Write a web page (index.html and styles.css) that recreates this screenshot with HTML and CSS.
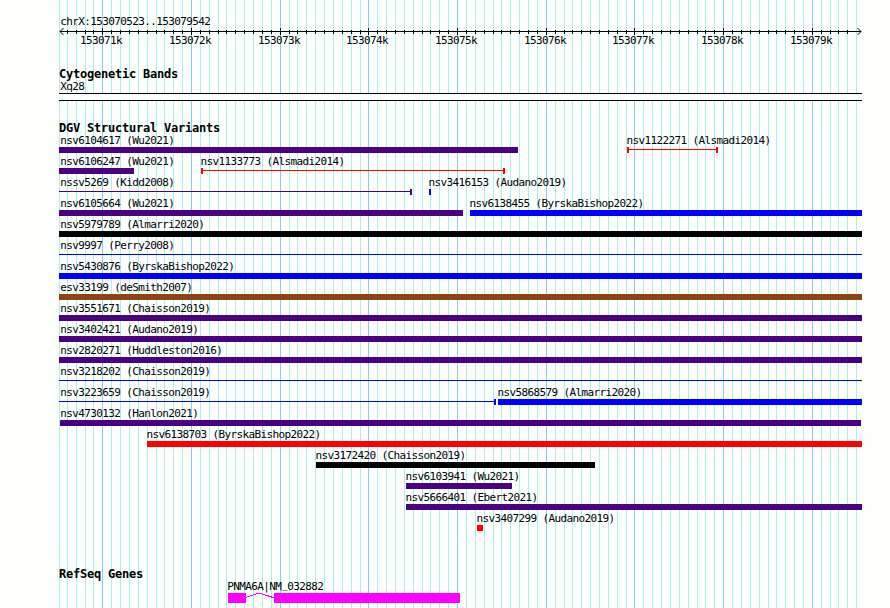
FILE: index.html
```html
<!DOCTYPE html>
<html lang="en">
<head>
<meta charset="utf-8">
<title>chrX:153070523..153079542</title>
<link rel="stylesheet" href="styles.css">
</head>
<body>
<main class="browser">
  <svg class="gridlines" id="gridlines" width="890" height="608" shape-rendering="crispEdges" aria-hidden="true"></svg>
  <section class="scale">
    <p class="label region">chrX:153070523..153079542</p>
    <svg class="axis" id="axis" width="803" height="9" aria-hidden="true"></svg>
    <div class="row ticks" id="ticks"></div>
  </section>
  <section class="cyto">
    <h2 class="heading">Cytogenetic Bands</h2>
    <p class="label">Xq28</p>
    <div class="band"></div>
  </section>
  <section class="variants">
    <h2 class="heading">DGV Structural Variants</h2>
    <div id="variants"></div>
  </section>
  <section class="genes">
    <h2 class="heading">RefSeq Genes</h2>
    <p class="label gene-label">PNMA6A|NM<span class="underscore">_</span>032882</p>
    <div class="gene">
      <span class="exon exon-first"></span>
      <svg class="intron" width="28" height="10" shape-rendering="crispEdges" aria-hidden="true"><path d="M0 4.5L10 .9L16 .9L28 4.8" fill="none" stroke="#f0f"/></svg>
      <span class="exon exon-second"></span>
    </div>
  </section>
</main>
<script src="script.js"></script>
</body>
</html>
```
FILE: styles.css
```css
* { box-sizing: border-box; margin: 0; padding: 0; }
body { background: #fcfffc; color: #000; overflow: hidden; }
.browser { position: relative; width: 890px; height: 608px; padding: 15px 0 0 59px; overflow: hidden; }
.gridlines { position: absolute; left: 0; top: 0; z-index: -1; }
svg { display: block; }
.label {
  height: 13px;
  padding-left: 1.3px;
  font: 11px/13px "DejaVu Sans Mono", monospace;
  letter-spacing: -0.622px;
  white-space: nowrap;
}
.heading {
  height: 14px;
  font: bold 12px/14px "DejaVu Sans Mono", monospace;
  letter-spacing: -0.224px;
  white-space: nowrap;
}
.row { display: grid; grid-template-columns: repeat(803, 1px); }
.scale { height: 52px; }
.region { height: 12px; }
.ticks { margin-top: -2px; }
.ticks .label { padding: 0; }
.cyto { height: 54px; }
.cyto .label { height: 12px; line-height: 11px; }
.band { width: 803px; height: 8px; background: #fcfffc; border: solid #000; border-width: 1px 0; }
.variants .heading { height: 13px; }
.variants .row { height: 21px; }
.feature { height: 19px; min-width: 0; }
.feature .label { padding: 0; margin-left: -0.6px; }
.feature.edge .label { margin-left: 1.3px; }
.feature.inset .label { margin-left: 0.3px; }
.bar { height: 6px; background: currentColor; }
.bar.thin { border: solid currentColor; border-width: 0; background: linear-gradient(currentColor, currentColor) 0 2px / 100% 1px no-repeat; }
.bar.cap-right { border-right-width: 2px; }
.bar.cap-both { border-left-width: 2px; border-right-width: 2px; }
.feature .label { color: #000; }
.purple { color: #4b0082; }
.blue { color: #0000ff; }
.red { color: #ff0000; }
.brown { color: #8b4513; }
.black { color: #000; }
.genes { padding-top: 34px; }
.gene-label { margin-left: 167px; height: 12px; line-height: 12px; }
.underscore { position: relative; top: -2px; }
.gene { display: flex; margin-left: 169px; }
.exon { height: 10px; background: #f0f; }
.exon-first { width: 18px; }
.exon-second { width: 186px; }
```
FILE: script.js
```js
const LEFT = 59;
const RIGHT = 862;
const STEP = 8.869;
const tickX = k => Math.floor(102.83 + STEP * k);

// Grid lines every 100 bp, darker every 1000 bp
let grid = `<rect x="${LEFT}" y="0" width="1" height="608" fill="#afeeee"/>`;
let axis = '<path d="M1 4.5H802" stroke="#000" shape-rendering="crispEdges"/>' +
  '<path d="M4.5 1L1 4.5L4.5 8M798.5 1L802 4.5L798.5 8" fill="none" stroke="#000"/>';
for (let k = -4; k <= 85; k++) {
  const x = tickX(k);
  const major = k % 10 === 0;
  grid += `<rect x="${x}" y="0" width="1" height="608" fill="${major ? '#87ceeb' : '#afeeee'}"/>`;
  if (k < 85) axis += `<rect x="${x - LEFT}" y="${major ? 1 : 3}" width="1" height="${major ? 7 : 4}"/>`;
}
document.getElementById('gridlines').innerHTML = grid;
document.getElementById('axis').innerHTML = axis;

let ticks = '';
for (let i = 0; i <= 8; i++) {
  const start = tickX(i * 10) - LEFT - 22 + 1;
  ticks += `<span class="label" style="grid-area: 1 / ${start} / 2 / ${start + 42}">${153071 + i}k</span>`;
}
document.getElementById('ticks').innerHTML = ticks;

// Each row: [label, start, end, color, bar style]
const rows = [
  [['nsv6104617 (Wu2021)', 59, 518, 'purple'], ['nsv1122271 (Alsmadi2014)', 627, 718, 'red', 'thin cap-both']],
  [['nsv6106247 (Wu2021)', 59, 134, 'purple'], ['nsv1133773 (Alsmadi2014)', 201, 505, 'red', 'thin cap-both']],
  [['nssv5269 (Kidd2008)', 59, 412, 'purple', 'thin cap-right'], ['nsv3416153 (Audano2019)', 429, 431, 'blue']],
  [['nsv6105664 (Wu2021)', 59, 463, 'purple'], ['nsv6138455 (ByrskaBishop2022)', 470, RIGHT, 'blue']],
  [['nsv5979789 (Almarri2020)', 59, RIGHT, 'black']],
  [['nsv9997 (Perry2008)', 59, RIGHT, 'blue', 'thin']],
  [['nsv5430876 (ByrskaBishop2022)', 59, RIGHT, 'blue']],
  [['esv33199 (deSmith2007)', 59, RIGHT, 'brown']],
  [['nsv3551671 (Chaisson2019)', 59, RIGHT, 'purple']],
  [['nsv3402421 (Audano2019)', 59, RIGHT, 'purple']],
  [['nsv2820271 (Huddleston2016)', 59, RIGHT, 'purple']],
  [['nsv3218202 (Chaisson2019)', 59, RIGHT, 'blue', 'thin']],
  [['nsv3223659 (Chaisson2019)', 59, 496, 'blue', 'thin cap-right'], ['nsv5868579 (Almarri2020)', 498, RIGHT, 'blue']],
  [['nsv4730132 (Hanlon2021)', 60, 861, 'purple']],
  [['nsv6138703 (ByrskaBishop2022)', 147, RIGHT, 'red']],
  [['nsv3172420 (Chaisson2019)', 316, 595, 'black']],
  [['nsv6103941 (Wu2021)', 406, 512, 'purple']],
  [['nsv5666401 (Ebert2021)', 406, RIGHT, 'purple']],
  [['nsv3407299 (Audano2019)', 477, 483, 'red']]
];
const edgeClass = start => start === LEFT ? ' edge' : start === LEFT + 1 ? ' inset' : '';
document.getElementById('variants').innerHTML = rows.map(row =>
  '<div class="row">' + row.map(([name, start, end, color, style = '']) =>
    `<div class="feature ${color}${edgeClass(start)}" style="grid-area: 1 / ${start - LEFT + 1} / 2 / ${end - LEFT + 1}">` +
    `<p class="label">${name}</p><div class="bar ${style}"></div></div>`
  ).join('') + '</div>'
).join('');
```
